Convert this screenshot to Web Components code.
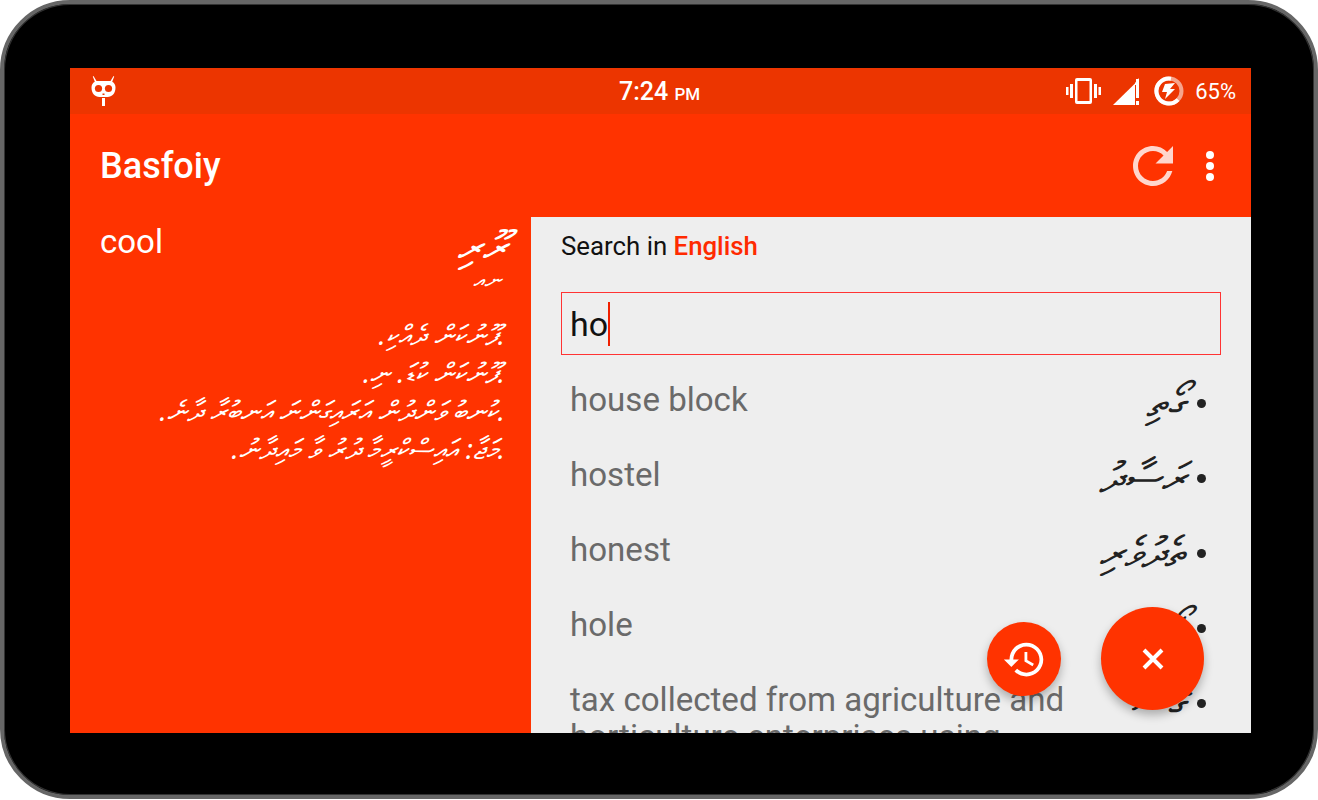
<!DOCTYPE html>
<html>
<head>
<meta charset="utf-8">
<title>Basfoiy</title>
<style>
  html, body { margin: 0; background: #fff; }
  body { font-family: Roboto, "Liberation Sans", sans-serif; }
</style>
</head>
<body>
<device-frame>
  <status-bar></status-bar>
  <app-bar title="Basfoiy"></app-bar>
  <div style="display:flex;flex:1;min-height:0;position:relative">
    <definition-pane></definition-pane>
    <search-pane>
      <result-row term="house block" dv="ގޯތި"></result-row>
      <result-row term="hostel" dv="ރަސާދު"></result-row>
      <result-row term="honest" dv="ތެދުވެރި"></result-row>
      <result-row term="hole" dv="ގޯޅި"></result-row>
      <result-row term="tax collected from agriculture and horticulture enterprises using" dv="ގޭސް"></result-row>
    </search-pane>
    <fab-button kind="history"></fab-button>
    <fab-button kind="close"></fab-button>
  </div>
</device-frame>

<script>
class DeviceFrame extends HTMLElement {
  constructor() {
    super();
    this.attachShadow({ mode: 'open' });
    this.shadowRoot.innerHTML = `
      <style>
        :host { display: block; width: 1318px; height: 800px; }
        #body {
          box-sizing: border-box;
          height: 799px;
          background: #000;
          border: 4px solid #666;
          border-radius: 70px;
          padding: 64px 63px 62px 66px;
          box-shadow: inset 0 0 0 1px #333;
        }
        #screen { display: flex; flex-direction: column; height: 665px; overflow: hidden; }
      </style>
      <div id="body"><div id="screen"><slot></slot></div></div>
    `;
  }
}

class StatusBar extends HTMLElement {
  constructor() {
    super();
    this.attachShadow({ mode: 'open' });
    this.shadowRoot.innerHTML = `
      <style>
        :host {
          display: flex; align-items: center; justify-content: space-between;
          flex: 0 0 46px; background: #ec3500; color: #fff; padding: 0 15px 0 21px;
          position: relative; font-size: 22px;
        }
        #time {
          position: absolute; left: 549px; top: 9px; font-weight: 500; font-size: 25px; line-height: 30px;
        }
        #time small { font-size: 17px; }
        #right { display: flex; align-items: center; }
        #vib { margin-right: 12px; }
        #sig { margin-right: 15px; }
        #bat { margin-right: 11px; }
        svg { display: block; }
      </style>
      <svg width="25" height="30" viewBox="0 0 25 30">
        <path fill="#fff" d="M2.500 0l3 5h14l3-5 .7.4-2 5.300C23.500 7 24.500 9 24.500 11.500c0 6-3.500 9.500-8 9.500h-8c-4.500 0-8-3.500-8-9.500 0-2.500 1-4.500 3.300-5.800l-2-5.300z"/>
        <circle cx="7.500" cy="12.500" r="3.600" fill="#ec3500"/>
        <circle cx="17.500" cy="12.500" r="3.600" fill="#ec3500"/>
        <path fill="#ec3500" d="M11.500 17.500h2v1.500h-2z"/>
        <path fill="#fff" d="M11 22h3v8h-3z"/>
      </svg>
      <span id="time">7:24 <small>PM</small></span>
      <div id="right">
        <svg id="vib" width="35" height="26" viewBox="0 0 35 26" fill="#fff">
          <path d="M11 0h13a2 2 0 0 1 2 2v22a2 2 0 0 1-2 2H11a2 2 0 0 1-2-2V2a2 2 0 0 1 2-2zm.5 3v20h12V3z"/>
          <path d="M4 6h3v14H4zM0 9h2.500v8H0zM28 6h3v14h-3zM32.500 9H35v8h-2.500z"/>
        </svg>
        <svg id="sig" width="26" height="27" viewBox="0 0 26 27" fill="#fff">
          <path d="M0 27L22 5.500V27z"/>
          <path d="M23 0h3v19h-3zM23 22h3v4h-3z" transform="translate(0 1)"/>
          <path d="M22 5l4-5v7h-4z"/>
        </svg>
        <svg id="bat" width="30" height="30" viewBox="0 0 30 30">
          <circle cx="15" cy="15" r="12.500" fill="none" stroke="#fff" stroke-opacity=".55" stroke-width="4"/>
          <path d="M17 2.700A12.500 12.500 0 1 0 24 23.600" fill="none" stroke="#fff" stroke-width="4"/>
          <path fill="#fff" d="M21 7l-10 1-3 8h5l-2 7 10-10h-5z"/>
        </svg>
        <span>65%</span>
      </div>
    `;
  }
}

class AppBar extends HTMLElement {
  constructor() {
    super();
    this.attachShadow({ mode: 'open' });
    this.shadowRoot.innerHTML = `
      <style>
        :host {
          display: flex; align-items: center; flex: 0 0 103px;
          background: #ff3300; color: #fff; padding: 0 30px;
        }
        h1 { margin: 0; font-size: 36px; font-weight: 500; flex: 1; }
        #refresh { margin-right: 22px; }
        #more { margin-right: 6px; }
        svg { display: block; }
      </style>
      <h1></h1>
      <svg id="refresh" width="60" height="60" viewBox="0 0 24 24" fill="#fff" fill-opacity=".8">
        <path d="M17.65 6.35C16.2 4.9 14.21 4 12 4c-4.420 0-7.990 3.580-7.990 8s3.570 8 7.990 8c3.730 0 6.840-2.550 7.730-6h-2.080c-.82 2.330-3.040 4-5.650 4-3.310 0-6-2.690-6-6s2.690-6 6-6c1.660 0 3.140.69 4.220 1.780L13 11h7V4l-2.350 2.350z"/>
      </svg>
      <svg id="more" width="10" height="32" viewBox="0 0 10 32" fill="#fff">
        <circle cx="5" cy="5" r="4"/><circle cx="5" cy="16" r="4"/><circle cx="5" cy="27" r="4"/>
      </svg>
    `;
    this.shadowRoot.querySelector('h1').textContent = this.getAttribute('title');
  }
}

class DefinitionPane extends HTMLElement {
  constructor() {
    super();
    this.attachShadow({ mode: 'open' });
    this.shadowRoot.innerHTML = `
      <style>
        :host {
          display: block; box-sizing: border-box; flex: 0 0 461px;
          background: #ff3300; color: #fff; padding: 6px 26px 0 30px;
        }
        #head { display: flex; justify-content: space-between; align-items: flex-start; height: 44px; }
        #word { font-size: 33px; line-height: 38px; }
        .dv { font-family: "Noto Sans", "DejaVu Sans", sans-serif; font-style: italic; direction: rtl; }
        #dvword { font-size: 42px; line-height: 44px; }
        #kind { text-align: right; font-size: 24px; line-height: 24px; margin-right: 4px; }
        ul { list-style: none; margin: 24px 0 0; padding: 0; font-size: 28px; line-height: 38px; white-space: nowrap; }
      </style>
      <div id="head"><span id="word">cool</span><span class="dv" id="dvword">ރޫރި</span></div>
      <div class="dv" id="kind">ނއ</div>
      <ul class="dv">
        <li>.ފޫނުކަން ދެއްކި.</li>
        <li>.ފޫނުކަން ކުޑަ. ނި.</li>
        <li>.ކުނބު ވަންދުން އަރައިގަންނަ އަނބުރާ ދާނެ.</li>
        <li>.މަޖާ: އައިސްކްރީމާ ދުރު ވާ މައިދާނު.</li>
      </ul>
    `;
  }
}

class SearchPane extends HTMLElement {
  constructor() {
    super();
    this.attachShadow({ mode: 'open' });
    this.shadowRoot.innerHTML = `
      <style>
        :host {
          display: block; box-sizing: border-box; flex: 1; min-width: 0;
          background: #eee; padding: 12px 30px 0; overflow: hidden;
        }
        #label { font-size: 25.800px; line-height: 34px; color: #111; }
        #label b { color: #ff2a00; font-weight: 500; }
        #box {
          box-sizing: border-box; height: 63px; margin: 29px 0 8px;
          border: 1.500px solid #f33; display: flex; align-items: center; padding-left: 8px;
          font-size: 34px; color: #111;
        }
        #caret { width: 2px; height: 44px; background: #f02000; }
      </style>
      <div id="label">Search in <b>English</b></div>
      <div id="box">ho<span id="caret"></span></div>
      <slot></slot>
    `;
  }
}

class ResultRow extends HTMLElement {
  constructor() {
    super();
    this.attachShadow({ mode: 'open' });
    this.shadowRoot.innerHTML = `
      <style>
        :host { display: flex; height: 75px; padding: 0 9px; align-items: flex-start; }
        #term { flex: 1; font-size: 33.100px; line-height: 37px; color: #6a6a6a; padding-top: 18px; padding-right: 40px; }
        #dv {
          font-family: "Noto Sans", "DejaVu Sans", sans-serif; font-style: italic;
          font-size: 42px; line-height: 75px; color: #222; direction: rtl; white-space: nowrap;
        }
        #dot { width: 9px; height: 9px; border-radius: 50%; background: #222; margin: 36px 6px 0 12px; flex: none; }
      </style>
      <span id="term"></span><span id="dv"></span><span id="dot"></span>
    `;
    this.shadowRoot.querySelector('#term').textContent = this.getAttribute('term');
    this.shadowRoot.querySelector('#dv').textContent = this.getAttribute('dv');
  }
}

class FabButton extends HTMLElement {
  constructor() {
    super();
    this.attachShadow({ mode: 'open' });
    const big = this.getAttribute('kind') === 'close';
    const icon = big
      ? `<svg width="24" height="24" viewBox="0 0 24 24"><path d="M3 3l18 18M21 3L3 21" stroke="#fff" stroke-width="4" fill="none"/></svg>`
      : `<svg width="45" height="45" viewBox="0 0 24 24" fill="#fff">
           <path d="M13 3a9 9 0 0 0-9 9H1l3.890 3.890.07.14L9 12H6c0-3.870 3.130-7 7-7s7 3.130 7 7-3.130 7-7 7c-1.930 0-3.680-.79-4.940-2.060l-1.420 1.420C8.270 19.990 10.510 21 13 21c4.970 0 9-4.030 9-9s-4.030-9-9-9zm-1 5v5l4.280 2.540.72-1.210-3.500-2.080V8H12z"/>
         </svg>`;
    this.shadowRoot.innerHTML = `
      <style>
        :host {
          position: absolute; display: flex; align-items: center; justify-content: center;
          border-radius: 50%; background: #ff3300;
          box-shadow: 0 5px 10px rgba(0,0,0,.28);
          ${big ? 'width:103px;height:103px;left:1031px;top:390px;' : 'width:74px;height:74px;left:917px;top:405px;'}
        }
        svg { display: block; }
      </style>
      ${icon}
    `;
  }
}

customElements.define('device-frame', DeviceFrame);
customElements.define('status-bar', StatusBar);
customElements.define('app-bar', AppBar);
customElements.define('definition-pane', DefinitionPane);
customElements.define('search-pane', SearchPane);
customElements.define('result-row', ResultRow);
customElements.define('fab-button', FabButton);
</script>
</body>
</html>
